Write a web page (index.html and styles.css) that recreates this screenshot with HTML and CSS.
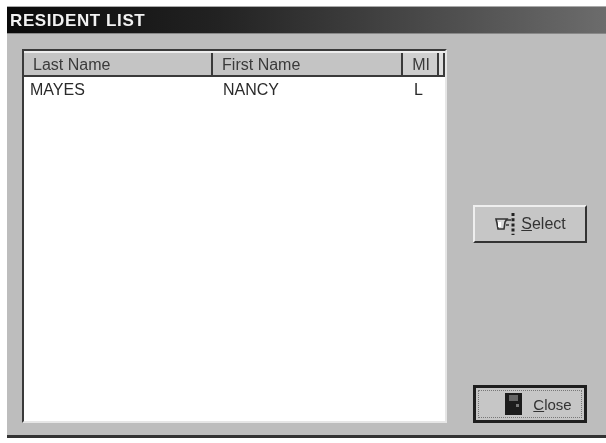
FILE: index.html
```html
<!DOCTYPE html>
<html lang="en">
<head>
<meta charset="utf-8">
<title>Resident List</title>
<link rel="stylesheet" href="styles.css">
</head>
<body>
<div class="window">
  <div class="titlebar">RESIDENT LIST</div>
  <div class="content">
    <div class="list">
      <div class="row head">
        <div class="cell col-last">Last Name</div>
        <div class="cell col-first">First Name</div>
        <div class="cell col-mi">MI</div>
        <div class="head-end"></div>
      </div>
      <div class="row data">
        <div class="cell col-last">MAYES</div>
        <div class="cell col-first">NANCY</div>
        <div class="cell col-mi">L</div>
      </div>
    </div>
    <div class="side">
      <button class="btn select">
        <svg class="icon" width="24" height="24" viewBox="0 0 24 24">
          <path d="M2 7h11l-2 3-1 7H4L3 11z" fill="#d8d8d8" stroke="#333" stroke-width="1.6"/>
          <path d="M4 10h3v5H4z" fill="#fff"/>
          <path d="M19 1v22" stroke="#222" stroke-width="3" stroke-dasharray="3 2.2"/>
          <path d="M13 8h4M12 13h3" stroke="#333" stroke-width="1.5"/>
        </svg>
        <span><u>S</u>elect</span>
      </button>
      <button class="btn close">
        <span class="focus">
          <svg class="icon" width="17" height="22" viewBox="0 0 17 22">
            <rect width="17" height="22" fill="#1c1c1c"/>
            <rect x="4" y="2" width="9" height="6" fill="#666"/>
            <rect x="11" y="11" width="3" height="3" fill="#777"/>
          </svg>
          <span><u>C</u>lose</span>
        </span>
      </button>
    </div>
  </div>
</div>
</body>
</html>
```

FILE: styles.css
```css
html, body {
  margin: 0;
  height: 100%;
  background: #fff;
  overflow: hidden;
}
body {
  padding: 6px 0 0 7px;
  box-sizing: border-box;
  font-family: "Liberation Sans", Arial, sans-serif;
  color: #2a2a2a;
}
.window {
  height: 432px;
  box-sizing: border-box;
  display: flex;
  flex-direction: column;
  background: #bdbdbd;
  border-top: 1px solid #aaa;
  border-bottom: 3px solid #333;
  filter: blur(0.5px);
}
.titlebar {
  height: 27px;
  box-sizing: border-box;
  padding: 3px 0 0 3px;
  background: linear-gradient(90deg, #0a0a0a 0%, #222 35%, #444 65%, #6c6c6c 100%);
  color: #f2f2f2;
  font-size: 17px;
  font-weight: 700;
  letter-spacing: 0.6px;
  line-height: 22px;
  border-bottom: 1px solid #888;
}
.content {
  flex: 1;
  display: flex;
  padding: 15px 19px 12px 15px;
}
.list {
  width: 425px;
  box-sizing: border-box;
  background: #fff;
  border-top: 2px solid #3a3a3a;
  border-left: 2px solid #3a3a3a;
  border-right: 2px solid #e6e6e6;
  border-bottom: 2px solid #e6e6e6;
}
.row {
  display: flex;
  font-size: 16px;
}
.head {
  height: 26px;
  box-sizing: border-box;
  background: #c4c4c4;
  border-top: 2px solid #ededed;
  border-bottom: 2px solid #3a3a3a;
  line-height: 24px;
  color: #3a3a3a;
}
.head .cell {
  border-right: 2px solid #3a3a3a;
}
.head .col-mi {
  background: #cfcfcf;
  width: 36px;
}
.head-end {
  width: 4px;
  border-right: 2px solid #3a3a3a;
  background: #dedede;
}
.cell {
  box-sizing: border-box;
}
.col-last {
  width: 190px;
  padding-left: 9px;
}
.col-first {
  width: 191px;
  padding-left: 9px;
}
.col-mi {
  width: 36px;
  padding-left: 9px;
}
.data {
  padding-top: 3px;
  line-height: 20px;
}
.data .col-last {
  padding-left: 6px;
}
.side {
  flex: 1;
  display: flex;
  flex-direction: column;
  align-items: flex-end;
  justify-content: space-between;
  padding: 156px 0 0;
}
.btn {
  width: 114px;
  height: 38px;
  box-sizing: border-box;
  display: flex;
  align-items: center;
  justify-content: center;
  gap: 3px;
  padding: 0;
  font: 16px "Liberation Sans", Arial, sans-serif;
  color: #333;
  background: #c6c6c6;
  border: 2px solid;
  border-color: #efefef #333 #333 #efefef;
}
.close {
  border: 3px solid #1e1e1e;
  padding: 2px;
}
.focus {
  flex: 1;
  align-self: stretch;
  display: flex;
  align-items: center;
  justify-content: center;
  gap: 11px;
  border: 1px dotted #777;
  padding-left: 17px;
  font-size: 15px;
}
.icon {
  flex: none;
}
```
